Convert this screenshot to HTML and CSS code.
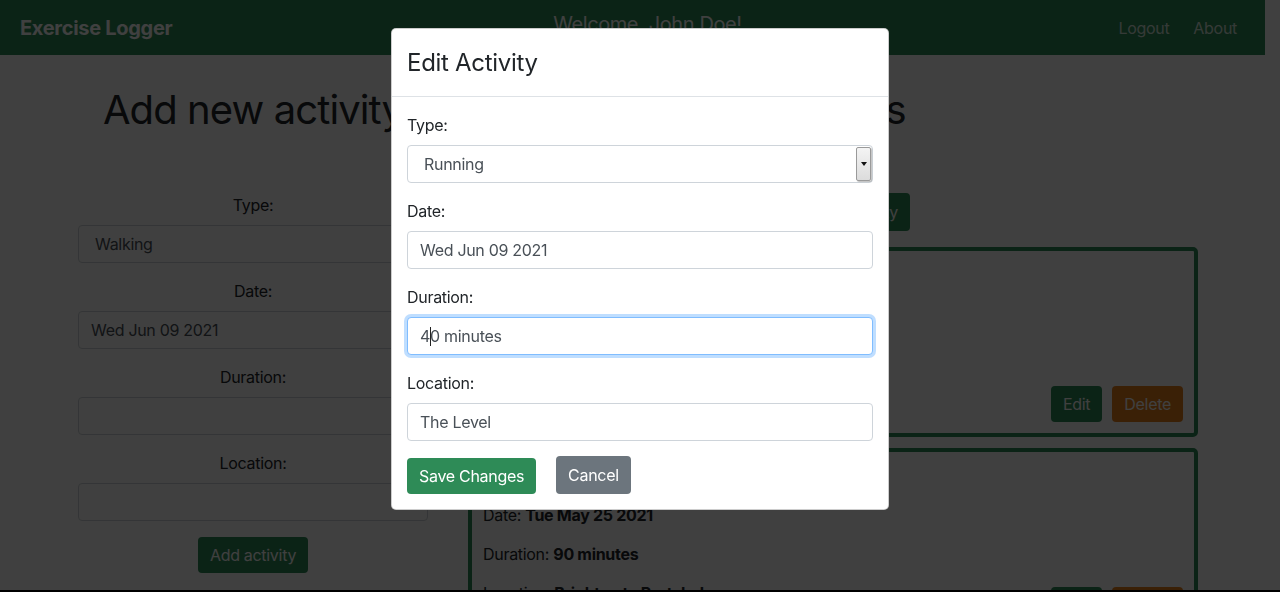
FILE: index.html
```html
<!DOCTYPE html>
<html lang="en">
<head>
<meta charset="utf-8">
<title>Exercise Logger</title>
<link rel="stylesheet" href="styles.css">
</head>
<body>
<nav class="navbar">
  <a class="brand" href="#">Exercise Logger</a>
  <h5 class="welcome">Welcome, John Doe!</h5>
  <div class="nav-links">
    <a href="#">Logout</a>
    <a href="#">About</a>
  </div>
</nav>

<main class="page">
  <section class="add-col">
    <h1 class="page-title">Add new activity</h1>
    <form class="add-form">
      <div class="field">
        <label>Type:</label>
        <div class="control control-select">Walking</div>
      </div>
      <div class="field">
        <label>Date:</label>
        <div class="control">Wed Jun 09 2021</div>
      </div>
      <div class="field">
        <label>Duration:</label>
        <div class="control"></div>
      </div>
      <div class="field">
        <label>Location:</label>
        <div class="control"></div>
      </div>
      <div class="form-actions">
        <button type="button" class="btn btn-green">Add activity</button>
      </div>
    </form>
  </section>

  <section class="list-col">
    <h1 class="page-title list-title">Activities</h1>
    <div class="list-actions">
      <button type="button" class="btn btn-green btn-tall">Search by activity</button>
    </div>
    <div class="card">
      <div class="card-details">
        <p>Type: <b>Running</b></p>
        <p>Date: <b>Wed Jun 09 2021</b></p>
        <p>Duration: <b>40 minutes</b></p>
        <p>Location: <b>The Level</b></p>
      </div>
      <div class="card-actions">
        <button type="button" class="btn btn-green">Edit</button>
        <button type="button" class="btn btn-orange">Delete</button>
      </div>
    </div>
    <div class="card">
      <div class="card-details">
        <p>Type: <b>Cycling</b></p>
        <p>Date: <b>Tue May 25 2021</b></p>
        <p>Duration: <b>90 minutes</b></p>
        <p>Location: <b>Brighton to Portslade</b></p>
      </div>
      <div class="card-actions">
        <button type="button" class="btn btn-green">Edit</button>
        <button type="button" class="btn btn-orange">Delete</button>
      </div>
    </div>
  </section>
</main>

<div class="backdrop"></div>

<div class="modal-layer">
  <div class="modal">
    <div class="modal-header">
      <h5 class="modal-title">Edit Activity</h5>
    </div>
    <div class="modal-body">
      <div class="m-field">
        <label>Type:</label>
        <div class="control control-select">
          <span>Running</span>
          <span class="select-arrow"><svg width="6" height="4" viewBox="0 0 6 4"><path d="M0 0H6L3 4Z" fill="#111"/></svg></span>
        </div>
      </div>
      <div class="m-field">
        <label>Date:</label>
        <div class="control">Wed Jun 09 2021</div>
      </div>
      <div class="m-field">
        <label>Duration:</label>
        <div class="control control-focus">4<span class="caret"></span>0 minutes</div>
      </div>
      <div class="m-field">
        <label>Location:</label>
        <div class="control">The Level</div>
      </div>
      <div class="modal-actions">
        <button type="button" class="btn btn-green">Save Changes</button>
        <button type="button" class="btn btn-gray">Cancel</button>
      </div>
    </div>
  </div>
</div>
</body>
</html>
```

FILE: styles.css
```css
* { box-sizing: border-box; }

html, body { height: 100%; }

body {
  margin: 0;
  padding-right: 15px;
  overflow: hidden;
  background: #ffffff;
  color: #212529;
  font-family: Inter, "Liberation Sans", sans-serif;
  font-size: 16px;
  line-height: 24px;
  letter-spacing: -0.3px;
}

/* ---------- navbar ---------- */
.navbar {
  height: 55px;
  background: #2e8b57;
  display: flex;
  align-items: center;
  justify-content: space-between;
  padding: 0 20px;
}

.brand {
  color: #ffffff;
  font-weight: 700;
  font-size: 20px;
  text-decoration: none;
}

.welcome {
  margin: 0 0 8px 20px;
  font-size: 20px;
  font-weight: 400;
  letter-spacing: -0.4px;
  color: #ffffff;
}

.nav-links {
  display: flex;
}

.nav-links a {
  color: rgba(255, 255, 255, 0.8);
  text-decoration: none;
  padding: 0 8px;
  margin-left: 8px;
}

/* ---------- page ---------- */
.page {
  display: grid;
  grid-template-columns: 350px 730px;
  column-gap: 40px;
  padding-left: 78px;
}

.page-title {
  margin: 31px 0 59px;
  font-size: 40px;
  line-height: 48px;
  font-weight: 400;
  letter-spacing: -0.9px;
  text-align: center;
}

.list-title {
  padding-right: 18px;
}

.field {
  margin-bottom: 16px;
  text-align: center;
}

.field label,
.m-field label {
  display: block;
  margin-bottom: 8px;
}

.control {
  height: 38px;
  border: 1px solid #ced4da;
  border-radius: 4px;
  background: #ffffff;
  color: #495057;
  padding: 6px 12px;
  text-align: left;
  display: flex;
  align-items: center;
}

.control-select {
  padding-left: 16px;
  justify-content: space-between;
  padding-right: 1px;
}

.form-actions {
  text-align: center;
}

.btn {
  font-family: inherit;
  font-size: 16px;
  line-height: 24px;
  letter-spacing: -0.3px;
  border: 0;
  border-radius: 4px;
  padding: 6px 12px;
  color: #ffffff;
  cursor: pointer;
}

.btn-green { background: #2e8b57; }
.btn-orange { background: #e8801a; }
.btn-gray { background: #6c757d; height: 38px; margin-top: -1px; }
.btn-tall { height: 38px; }

.list-actions {
  text-align: center;
  margin-bottom: 16px;
}

.card {
  border: 4px solid #2e8b57;
  border-radius: 5px;
  padding: 12px 11px 11px 11px;
  display: flex;
  justify-content: space-between;
  align-items: flex-end;
  margin-bottom: 11px;
}

.card-details {
  padding-bottom: 3px;
}

.card-details p {
  margin: 0 0 15px;
}

.card-actions {
  display: flex;
  gap: 10px;
}

/* ---------- modal ---------- */
.backdrop {
  position: fixed;
  inset: 0;
  background: rgba(0, 0, 0, 0.75);
  border-bottom: 2px solid #000;
}

.modal-layer {
  position: fixed;
  inset: 0;
  display: flex;
  justify-content: center;
  align-items: flex-start;
  padding-top: 28px;
}

.modal {
  width: 498px;
  background: #ffffff;
  border: 1px solid rgba(0, 0, 0, 0.2);
  border-radius: 5px;
}

.modal-header {
  padding: 16px 15px;
  border-bottom: 1px solid #dee2e6;
}

.modal-title {
  margin: 0;
  font-size: 24px;
  line-height: 35px;
  font-weight: 400;
  letter-spacing: -0.3px;
}

.modal-body {
  padding: 16px 15px 15px;
}

.m-field {
  margin-bottom: 16px;
}

.select-arrow {
  width: 15px;
  height: 34px;
  border: 1px solid #9a9a9a;
  border-radius: 2px;
  background: linear-gradient(#f4f4f4, #dcdcdc);
  display: flex;
  align-items: center;
  justify-content: center;
  box-shadow: 1px 1px 1px rgba(0, 0, 0, 0.25);
}

.control-focus {
  border-color: #80bdff;
  box-shadow: 0 0 0 3px rgba(0, 123, 255, 0.25);
}

.caret {
  display: inline-block;
  width: 1px;
  height: 19px;
  background: #222;
  margin-right: -1px;
}

.modal-actions {
  display: flex;
  align-items: center;
  gap: 20px;
}
```
